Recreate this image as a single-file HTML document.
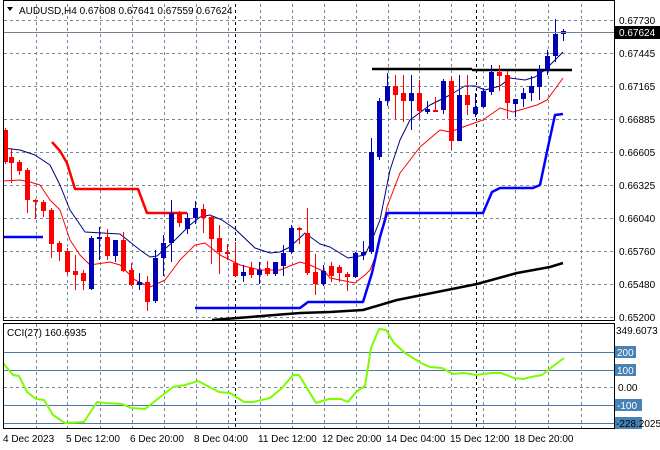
<!DOCTYPE html>
<html><head><meta charset="utf-8"><style>
html,body{margin:0;padding:0;background:#fff;width:660px;height:450px;overflow:hidden}
svg{display:block}
text{font-family:"Liberation Sans",sans-serif;font-size:10px}
</style></head><body>
<svg id="s" width="660" height="450" xmlns="http://www.w3.org/2000/svg">
<rect width="660" height="450" fill="#fff"/>
<g id="grid"></g>
<g id="lines"></g>
<g id="candles"></g>
<rect x="3.5" y="0.5" width="611" height="320" fill="none" stroke="#000"/>
<rect x="3.5" y="323.5" width="611" height="105" fill="none" stroke="#000"/>
<line x1="4" y1="32.5" x2="614" y2="32.5" stroke="#708090"/>
<path d="M7 7 L13 7 L10 11 Z" fill="#000"/>
<text x="19" y="14" fill="#000">AUDUSD,H4  0.67608 0.67641 0.67559 0.67624</text>
<text x="7" y="336" fill="#000">CCI(27) 160.6935</text>
<g id="axis" fill="#000"></g>
</svg>
<script>
const NS="http://www.w3.org/2000/svg";
function el(p,t,a,txt){const e=document.createElementNS(NS,t);for(const k in a)e.setAttribute(k,a[k]);if(txt!==undefined)e.textContent=txt;document.getElementById(p).appendChild(e);return e;}
const vx=[36,67,100,132,164,196,228,260,292,324,356,388,419,451,483,515,548,581];
vx.forEach(x=>{el("grid","line",{x1:x+.5,y1:4,x2:x+.5,y2:320,stroke:"#778899","stroke-dasharray":"3,3"});el("grid","line",{x1:x+.5,y1:324,x2:x+.5,y2:428,stroke:"#778899","stroke-dasharray":"3,3"});});
[235,476].forEach(x=>{el("grid","line",{x1:x+.5,y1:4,x2:x+.5,y2:428,stroke:"#000","stroke-dasharray":"3,3"});});
[20,53,86,119,152,185,218,251,284,317].forEach(y=>el("grid","line",{x1:4,y1:y+.5,x2:614,y2:y+.5,stroke:"#778899","stroke-dasharray":"3,3"}));
[352,370,405,423].forEach(y=>el("grid","line",{x1:4,y1:y+.5,x2:614,y2:y+.5,stroke:"#4a7aa6"}));
el("grid","line",{x1:4,y1:387.5,x2:614,y2:387.5,stroke:"#778899","stroke-dasharray":"3,3"});
function pl(pts,c,w){el("lines","polyline",{points:pts,fill:"none",stroke:c,"stroke-width":w,"stroke-linejoin":"round"});}
pl("3,148 20,150 35,155 50,165 60,185 70,210 85,232 120,234 140,250 150,257 157,256 175,240 190,225 200,217 210,215 222,220 235,229 255,248 270,253 280,252 290,247 305,233 320,244 330,247 348,258 365,255 372,240 380,220 390,170 400,140 410,120 430,105 450,95 465,86 475,86 485,90 500,86 510,78 525,80 535,77 545,70 553,62 563,52","#000080",1);
pl("3,181 20,180 30,182 40,185 50,200 60,210 70,240 80,255 90,265 110,262 120,265 135,280 150,287 165,280 180,260 195,245 205,243 220,255 240,265 260,270 280,270 300,262 310,265 325,272 330,278 340,280 355,283 365,275 370,270 377,253 387,207 400,173 420,147 440,130 450,132 463,127 483,120 500,108 513,112 537,105 547,100 563,78","#ff0000",1);
pl("52,142 60,151 67,163 75,189 138,189 147,213 187,213","#ff0000",2.5);
pl("3,237 43,237","#0000ff",2.5);
pl("195,308 300,308 308,302 363,302 372,273 380,237 387,213 483,213 492,192 500,188 533,188 540,185 548,147 555,115 563,114","#0000ff",2.5);
pl("212,320 300,313 330,312 363,310 397,300 477,284 517,273 550,267 563,263","#000",2.5);
pl("372,69 472,69","#000",2.5);pl("472,70 572,70","#000",2.5);
pl("3,363 13,375 19,376 27,392 36,399 44,400 53,415 65,423 84,422 97,402 105,403 122,404 131,408 145,409 173,387 185,385 198,381 219,392 230,393 244,402 253,402 270,398 282,388 293,375 299,375 316,403 329,399 341,399 348,402 356,392 365,386 371,348 379,329 386,330 394,343 405,353 421,363 430,367 442,368 453,374 464,373 476,375 491,373 501,373 514,378 523,379 531,377 542,375 552,367 564,358","#7cfc00",2);
const C=[[5,130,162,128,164,'r'],[11,157,163,148,183,'r'],[19,162,171,160,175,'r'],[27,170,200,168,213,'r'],[35,200,202,199,219,'r'],[43,202,211,200,217,'r'],[51,210,244,208,258,'r'],[59,243,252,241,261,'r'],[67,251,272,248,275,'r'],[75,271,275,255,290,'r'],[83,273,281,270,290,'r'],[91,238,289,236,290,'b'],[99,237,239,227,260,'b'],[107,237,256,229,260,'r'],[115,240,256,240,262,'b'],[123,240,271,232,272,'r'],[131,270,285,263,286,'r'],[139,282,285,273,290,'b'],[147,282,302,276,311,'r'],[155,258,301,250,303,'b'],[163,243,258,235,276,'b'],[171,213,243,200,262,'b'],[179,213,223,211,227,'r'],[187,218,229,213,234,'b'],[195,208,218,201,224,'b'],[203,209,218,204,233,'r'],[211,217,239,215,264,'r'],[219,238,252,225,274,'r'],[227,252,254,244,260,'r'],[235,263,276,242,276,'r'],[243,272,276,265,282,'b'],[251,268,275,262,278,'r'],[259,270,275,262,284,'b'],[267,268,274,261,276,'r'],[275,262,274,262,276,'b'],[283,253,266,245,276,'b'],[291,228,252,225,254,'b'],[299,228,230,227,244,'r'],[307,233,273,208,275,'r'],[315,272,284,254,295,'r'],[323,271,284,265,286,'b'],[331,266,276,262,282,'r'],[339,267,273,265,282,'r'],[347,274,277,272,291,'r'],[355,253,277,252,278,'b'],[363,252,255,241,260,'b'],[371,152,252,138,254,'b'],[379,101,157,98,160,'b'],[387,86,101,73,106,'b'],[395,86,95,75,119,'r'],[403,93,101,75,122,'r'],[411,93,101,75,130,'b'],[419,93,111,80,119,'r'],[427,109,112,101,114,'b'],[435,110,112,97,112,'r'],[443,81,110,79,114,'b'],[451,81,141,76,150,'r'],[459,95,141,75,141,'b'],[467,95,105,75,115,'r'],[475,107,114,93,117,'b'],[483,91,107,88,108,'b'],[491,72,92,65,95,'b'],[499,72,76,65,91,'r'],[507,75,103,71,119,'r'],[515,99,104,99,117,'b'],[523,93,99,88,107,'b'],[531,86,93,76,101,'b'],[539,70,87,65,100,'b'],[547,56,70,50,75,'b'],[555,34,56,19,62,'b'],[563,31,34,29,41,'b']];
C.forEach(c=>{const col=c[5]=='r'?'#ff0000':'#0000b4';el("candles","line",{x1:c[0]+.5,y1:c[3],x2:c[0]+.5,y2:c[4],stroke:col});el("candles","rect",{x:c[0]-2,y:c[1],width:5,height:Math.max(2,c[2]-c[1]),fill:col});});
[["0.67730",20],["0.67445",53],["0.67165",86],["0.66885",119],["0.66605",152],["0.66325",185],["0.66040",218],["0.65760",251],["0.65480",284],["0.65200",317]].forEach(a=>el("axis","text",{x:619,y:a[1]+4},a[0]));
el("axis","rect",{x:615,y:26,width:45,height:13,fill:"#000"});
el("axis","text",{x:619,y:36,fill:"#fff"},"0.67624");
el("axis","text",{x:616,y:334},"349.6073");
[["200",352],["100",370],["-100",405],["-228",423]].forEach(a=>{el("axis","rect",{x:615,y:a[1]-6,width:a[0].length*6+3,height:12,fill:"#4682b4"});});
[["200",352],["100",370],["-100",405]].forEach(a=>el("axis","text",{x:617,y:a[1]+4,fill:"#fff"},a[0]));
el("axis","text",{x:618,y:391},"0.00");
el("axis","text",{x:616,y:427},"-228.2025");
[["4 Dec 2023",3],["5 Dec 12:00",66],["6 Dec 20:00",130],["8 Dec 04:00",194],["11 Dec 12:00",258],["12 Dec 20:00",322],["14 Dec 04:00",386],["15 Dec 12:00",450],["18 Dec 20:00",514]].forEach(a=>el("axis","text",{x:a[1],y:442},a[0]));
</script>
</body></html>
